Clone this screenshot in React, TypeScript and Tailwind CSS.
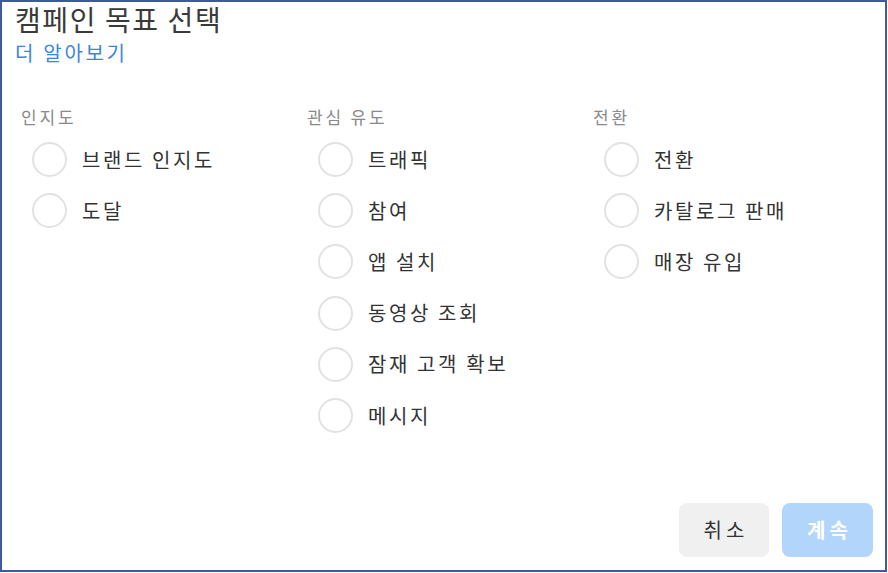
import React from "react";

const columns = [
  { title: "인지도", items: ["브랜드 인지도", "도달"] },
  { title: "관심 유도", items: ["트래픽", "참여", "앱 설치", "동영상 조회", "잠재 고객 확보", "메시지"] },
  { title: "전환", items: ["전환", "카탈로그 판매", "매장 유입"] },
];

export default function App() {
  return (
    <div className="w-[888px] h-[573px] bg-white" style={{ fontFamily: '"Noto Sans CJK KR", "Noto Sans", sans-serif' }}>
      <div className="w-[887px] h-[572px] border-2 border-[#3d5a9e] flex flex-col">
        <div className="pl-[13px] text-[28px] leading-[34px] tracking-[1.6px] text-[#3a3a3a]">캠페인 목표 선택</div>
        <div className="pl-[13px] mt-[3px] text-[20px] leading-[28px] tracking-[2.7px] text-[#3a86e0]">더 알아보기</div>
        <div className="mt-[38px] pl-[19px] grid grid-cols-[286px_286px_286px]">
          {columns.map((col) => (
            <div key={col.title} className="flex flex-col">
              <div className="text-[17px] leading-[24px] tracking-[2.8px] text-[#8a8a8a]">{col.title}</div>
              <div className="mt-[5px] pl-[11px] flex flex-col">
                {col.items.map((it) => (
                  <div key={it} className="h-[51.2px] flex items-center gap-[15px]">
                    <div className="w-[35px] h-[35px] rounded-full border-2 border-[#e2e2e2] bg-white shrink-0" />
                    <span className="text-[20px] leading-[28px] tracking-[2.6px] text-[#333333]">{it}</span>
                  </div>
                ))}
              </div>
            </div>
          ))}
        </div>
        <div className="mt-auto flex justify-end gap-[13px] pr-[12px] pb-[13px]">
          <button className="w-[90px] h-[54px] rounded-[8px] bg-[#f0f0f0] text-[20px] tracking-[4px] pl-[4px] text-[#333333]">취소</button>
          <button className="w-[91px] h-[54px] rounded-[8px] bg-[#b2d5fc] text-[20px] tracking-[4px] pl-[4px] font-bold text-white">계속</button>
        </div>
      </div>
    </div>
  );
}
